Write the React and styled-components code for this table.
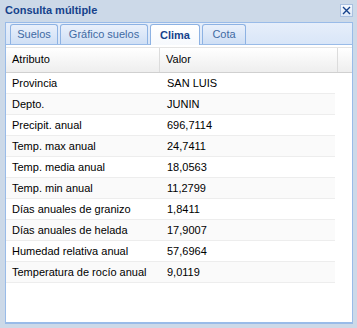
import React from "react";
import styled, { createGlobalStyle } from "styled-components";

const rows = [
  ["Provincia", "SAN LUIS"],
  ["Depto.", "JUNIN"],
  ["Precipit. anual", "696,7114"],
  ["Temp. max anual", "24,7411"],
  ["Temp. media anual", "18,0563"],
  ["Temp. min anual", "11,2799"],
  ["Días anuales de granizo", "1,8411"],
  ["Días anuales de helada", "17,9007"],
  ["Humedad relativa anual", "57,6964"],
  ["Temperatura de rocío anual", "9,0119"],
];

const tabs = [
  { label: "Suelos", width: 48 },
  { label: "Gráfico suelos", width: 88 },
  { label: "Clima", width: 50, active: true },
  { label: "Cota", width: 44 },
];

const GlobalStyle = createGlobalStyle`
  body {
    margin: 0;
    font-family: "Liberation Sans", Arial, sans-serif;
    font-size: 11px;
  }
`;

const Window = styled.div`
  width: 357px;
  height: 328px;
  box-sizing: border-box;
  background: #ccd9e8;
  display: flex;
  flex-direction: column;
  padding: 0 4px 4px 5px;
`;

const Header = styled.div`
  height: 22px;
  display: flex;
  align-items: flex-start;
  justify-content: space-between;
`;

const Title = styled.div`
  font-weight: bold;
  font-size: 11px;
  color: #15428b;
  padding-top: 3px;
  line-height: 14px;
`;

const CloseBtn = styled.div`
  width: 13px;
  height: 13px;
  margin-top: 4px;
  box-sizing: border-box;
  border: 1px solid #a9c0e0;
  background: linear-gradient(#f4f8fd, #dfe9f7);
  display: flex;
  align-items: center;
  justify-content: center;
`;

const Panel = styled.div`
  flex: 1;
  display: flex;
  flex-direction: column;
`;

const Strip = styled.div`
  height: 23px;
  box-sizing: border-box;
  border: 1px solid #99bbe8;
  background: linear-gradient(#e6eefa, #d9e6f8);
  display: flex;
  align-items: flex-end;
  gap: 2px;
  padding-left: 4px;
`;

const Tab = styled.div`
  width: ${(p) => p.$w}px;
  height: ${(p) => (p.$active ? 21 : 20)}px;
  box-sizing: border-box;
  border: 1px solid #8db2e3;
  border-bottom: none;
  border-radius: 3px 3px 0 0;
  margin-bottom: ${(p) => (p.$active ? -1 : 0)}px;
  background: ${(p) =>
    p.$active
      ? "linear-gradient(#ffffff, #f6f9fd)"
      : "linear-gradient(#e9f0fb, #cfdff5)"};
  color: ${(p) => (p.$active ? "#15428b" : "#416aa3")};
  font-weight: ${(p) => (p.$active ? "bold" : "normal")};
  font-size: 11px;
  display: flex;
  align-items: center;
  justify-content: center;
  padding-bottom: 1px;
  position: relative;
  z-index: 1;
`;

const Body = styled.div`
  flex: 1;
  box-sizing: border-box;
  background: #fff;
  border: 1px solid #99bbe8;
  border-top: none;
  border-bottom: 2px solid #99bbe8;
  padding-top: 2px;
`;

const HeaderRow = styled.div`
  height: 24px;
  display: grid;
  grid-template-columns: 154px 178px 1fr;
  background: linear-gradient(#ffffff, #eeeeee);
  border-top: 1px solid #e4e4e4;
  border-bottom: 1px solid #d0d0d0;
  color: #000;
`;

const HeadCell = styled.div`
  padding-left: 6px;
  line-height: 23px;
  border-right: 1px solid ${(p) => (p.$last ? "transparent" : "#dcdcdc")};
`;

const Row = styled.div`
  width: 329px;
  height: 21px;
  box-sizing: border-box;
  display: grid;
  grid-template-columns: 155px 1fr;
  background: ${(p) => (p.$alt ? "#fafafa" : "#ffffff")};
  border-bottom: 1px solid #ededed;
  line-height: 20px;
  color: #000;
`;

const Cell = styled.div`
  padding-left: 6px;
  white-space: nowrap;
`;

export default function App() {
  return (
    <>
      <GlobalStyle />
      <Window>
        <Header>
          <Title>Consulta múltiple</Title>
          <CloseBtn>
            <svg width="9" height="9" viewBox="0 0 9 9">
              <path d="M1 1 L8 8 M8 1 L1 8" stroke="#15428b" strokeWidth="1.4" />
            </svg>
          </CloseBtn>
        </Header>
        <Panel>
          <Strip>
            {tabs.map((t) => (
              <Tab key={t.label} $w={t.width} $active={t.active}>
                {t.label}
              </Tab>
            ))}
          </Strip>
          <Body>
            <HeaderRow>
              <HeadCell>Atributo</HeadCell>
              <HeadCell>Valor</HeadCell>
              <HeadCell $last />
            </HeaderRow>
            {rows.map(([a, v], i) => (
              <Row key={a} $alt={i % 2 === 1}>
                <Cell>{a}</Cell>
                <Cell>{v}</Cell>
              </Row>
            ))}
          </Body>
        </Panel>
      </Window>
    </>
  );
}
